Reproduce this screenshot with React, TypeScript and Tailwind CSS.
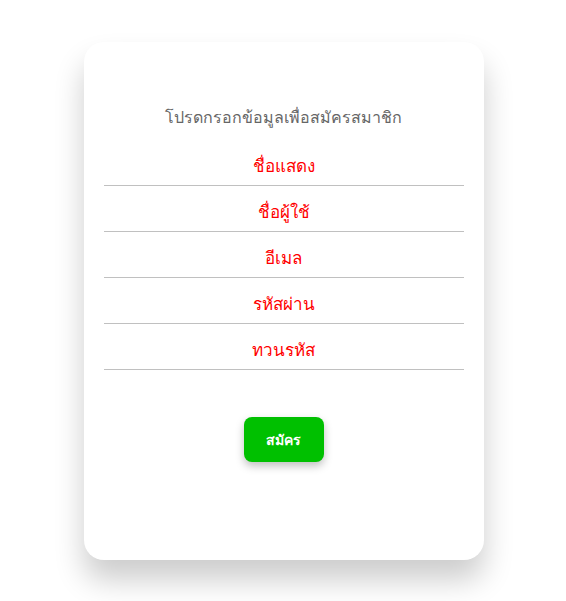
import React from 'react';

const fields = ['ชื่อแสดง', 'ชื่อผู้ใช้', 'อีเมล', 'รหัสผ่าน', 'ทวนรหัส'];

const App: React.FC = () => {
  return (
    <div className="min-h-screen bg-white pt-[42px] pl-px" style={{ fontFamily: '"Noto Sans", "DejaVu Sans", sans-serif' }}>
      <div className="mx-auto w-[400px] h-[518px] bg-white rounded-[20px] shadow-[0_20px_30px_rgba(0,0,0,0.2)] px-5 pt-[63px]">
        <h1 className="text-center text-[16px] text-[#666]">โปรดกรอกข้อมูลเพื่อสมัครสมาชิก</h1>
        <form className="mt-[11px] flex flex-col" onSubmit={(e) => e.preventDefault()}>
          {fields.map((f, i) => (
            <input
              key={i}
              type={i > 2 ? 'password' : 'text'}
              placeholder={f}
              className="h-[46px] w-full border-b border-[#c0c0c0] pt-[6px] text-center text-[17px] outline-none placeholder:text-[#ff0000]"
            />
          ))}
          <button
            type="submit"
            className="mx-auto mt-[47px] h-[45px] w-[80px] rounded-lg bg-[#00c000] text-[14px] font-semibold text-white shadow-[0_4px_8px_rgba(0,0,0,0.25)]"
          >
            สมัคร
          </button>
        </form>
      </div>
    </div>
  );
};

export default App;
